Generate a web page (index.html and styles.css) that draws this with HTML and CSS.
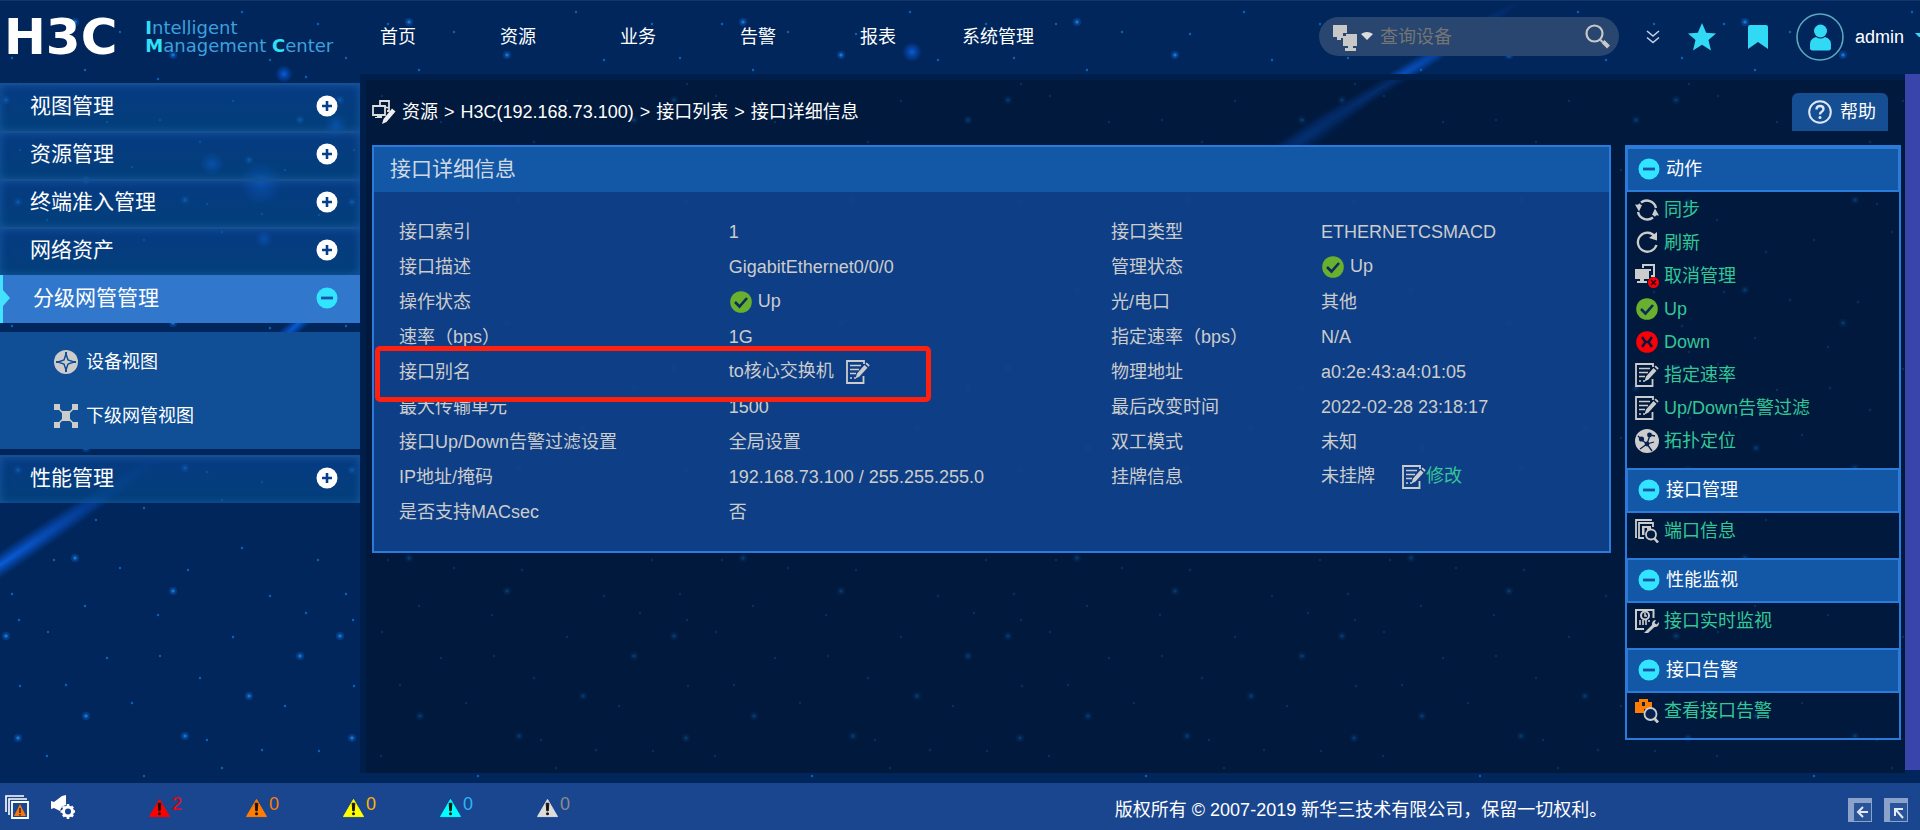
FILE: index.html
```html
<!DOCTYPE html>
<html lang="zh-CN">
<head>
<meta charset="UTF-8">
<meta name="viewport" content="width=device-width, initial-scale=1.0">
<title>接口详细信息</title>
<link rel="stylesheet" href="styles.css">
</head>
<body>

<!-- starry background -->
<svg class="sky" viewBox="0 0 1920 830" preserveAspectRatio="xMidYMid slice" aria-hidden="true">
    <defs>
        <pattern id="stars" width="334" height="268" patternUnits="userSpaceOnUse">
            <g fill="#0a64b4">
                <circle cx="12" cy="58" r="1.2"/><circle cx="54" cy="24" r="1.2"/><circle cx="48" cy="96" r="1.2"/>
                <circle cx="85" cy="70" r="1.2"/><circle cx="120" cy="32" r="1.2"/><circle cx="158" cy="79" r="1.2"/>
                <circle cx="19" cy="84" r="1.2"/><circle cx="107" cy="122" r="1.2"/><circle cx="66" cy="149" r="1.2"/>
                <circle cx="132" cy="167" r="1.2"/><circle cx="200" cy="142" r="1.2"/><circle cx="233" cy="101" r="1.2"/>
                <circle cx="188" cy="34" r="1.2"/><circle cx="270" cy="60" r="1.2"/><circle cx="306" cy="77" r="1.2"/>
                <circle cx="319" cy="215" r="1.2"/><circle cx="207" cy="204" r="1.2"/><circle cx="144" cy="240" r="1.2"/>
                <circle cx="47" cy="220" r="1.2"/><circle cx="285" cy="170" r="1.2"/><circle cx="242" cy="12" r="1.2"/>
                <circle cx="160" cy="120" r="1.2"/><circle cx="222" cy="232" r="1.2"/><circle cx="96" cy="252" r="1.2"/>
                <circle cx="262" cy="214" r="1.2"/><circle cx="318" cy="24" r="1.2"/><circle cx="20" cy="150" r="1.2"/>
            </g>
            <g fill="#063a86">
                <circle cx="6" cy="100" r="4"/><circle cx="75" cy="22" r="4"/><circle cx="173" cy="55" r="4"/>
                <circle cx="86" cy="180" r="4"/><circle cx="249" cy="160" r="4"/><circle cx="185" cy="200" r="4"/>
                <circle cx="300" cy="120" r="4"/><circle cx="18" cy="202" r="4"/>
            </g>
            <g fill="#1078c4">
                <circle cx="6" cy="100" r="1.8"/><circle cx="75" cy="22" r="1.8"/><circle cx="173" cy="55" r="1.8"/>
                <circle cx="86" cy="180" r="1.8"/><circle cx="249" cy="160" r="1.8"/><circle cx="185" cy="200" r="1.8"/>
                <circle cx="300" cy="120" r="1.8"/><circle cx="18" cy="202" r="1.8"/>
            </g>
        </pattern>
        <radialGradient id="glow">
            <stop offset="0" stop-color="#0a63e8" stop-opacity=".9"/>
            <stop offset="1" stop-color="#0a50c8" stop-opacity="0"/>
        </radialGradient>
    </defs>
    <rect width="1920" height="830" fill="#00265c"/>
    <rect width="1920" height="830" fill="url(#stars)"/>
    <ellipse cx="0" cy="0" rx="180" ry="9" fill="url(#glow)" transform="translate(1370 95) rotate(-32)"/>
    <ellipse cx="0" cy="0" rx="90" ry="14" fill="url(#glow)" transform="translate(1305 138) rotate(-34)"/>
    <ellipse cx="0" cy="0" rx="200" ry="12" fill="url(#glow)" transform="translate(0 565) rotate(-34)"/>
    <ellipse cx="0" cy="0" rx="90" ry="8" fill="url(#glow)" transform="translate(300 322) rotate(-42)"/>
    <circle cx="261" cy="183" r="22" fill="url(#glow)"/>
    <circle cx="336" cy="125" r="12" fill="url(#glow)"/>
    <circle cx="264" cy="239" r="9" fill="url(#glow)"/>
    <circle cx="284" cy="74" r="9" fill="url(#glow)"/>
    <circle cx="912" cy="52" r="10" fill="url(#glow)"/>
    <circle cx="212" cy="164" r="12" fill="url(#glow)"/>
</svg>

<!-- shared icons -->
<svg class="defs" aria-hidden="true">
    <symbol id="i-plus" viewBox="0 0 22 22"><circle cx="11" cy="11" r="10.5" fill="#fff"/><path d="M11 6v10M6 11h10" stroke="#06408a" stroke-width="2.6"/></symbol>
    <symbol id="i-minus" viewBox="0 0 22 22"><circle cx="11" cy="11" r="10.5" fill="#31e4ff"/><path d="M5 11h12" stroke="#1a55a5" stroke-width="2.8"/></symbol>
    <symbol id="i-ok" viewBox="0 0 24 24"><circle cx="12" cy="12" r="10.8" fill="#69b02e"/><path d="M6 12l4.500 4.500L18 8" fill="none" stroke="#0b2b5c" stroke-width="2.600"/></symbol>
    <symbol id="i-bad" viewBox="0 0 24 24"><circle cx="12" cy="12" r="10.8" fill="#fb0006"/><path d="M7 7l3.500 5L7 17M17 7l-3.500 5 3.500 5M9 12h6" fill="none" stroke="#08173c" stroke-width="2.600"/></symbol>
    <symbol id="i-edit" viewBox="0 0 24 24"><path d="M18 4V1H1v22h16.500v-7" fill="none" stroke="#ccc" stroke-width="1.800"/><path d="M4 5.500h11M4 9.500h9M4 13.500h6M4 18h2M8 18h2" stroke="#ccc" stroke-width="1.300"/><path d="M9.500 18.500l1.500-5L18.500 5l3 2.800-8 8.700z M19.500 3.800l1.200-1.200 3 2.600-1.200 1.600z" fill="#ccc"/></symbol>
    <symbol id="i-sync" viewBox="0 0 24 24"><path d="M6 4.500A9.500 9.500 0 0 1 21 10M18 19.500A9.500 9.500 0 0 1 3 14M3 10a9.500 9.500 0 0 1 2-4M21 14a9.500 9.500 0 0 1-2 4" fill="none" stroke="#ccc" stroke-width="2.400"/><path d="M0 6.500l7 .5-3 6.500zM24 17.500l-7-.5 3-6.500z" fill="#ccc"/></symbol>
    <symbol id="i-refresh" viewBox="0 0 24 24"><path d="M20 5.500A9.500 9.500 0 1 0 21.500 14" fill="none" stroke="#ccc" stroke-width="2.300"/><path d="M22 1v8.500l-8-2.500z" fill="#ccc"/></symbol>
    <symbol id="i-unmanage" viewBox="0 0 24 24"><path d="M8 4V1h11v11h-3" fill="none" stroke="#ccc" stroke-width="2"/><path d="M0 5h14v10H9v2h3v2H2v-2h3v-2H0zM11 5h5v2h-5z" fill="#ccc"/><circle cx="18.500" cy="18.500" r="5.500" fill="#fb0006"/><path d="M16 16l5 5m0-5l-5 5" stroke="#300018" stroke-width="1.600"/></symbol>
    <symbol id="i-topo" viewBox="0 0 24 24"><circle cx="12" cy="12" r="12" fill="#ccc"/><path d="M3 7l4 4M7 11l5 4M15 6l-3 9M12 15l7-2M12 15l-7 5M12 15l5 7M15 6l5 1" stroke="#07214f" stroke-width="1.300"/><circle cx="6.500" cy="10" r="2.600" fill="#07214f"/><circle cx="14.500" cy="6" r="2.400" fill="#07214f"/><circle cx="12" cy="15" r="2.400" fill="#07214f"/></symbol>
    <symbol id="i-port" viewBox="0 0 24 24"><path d="M2 18H1V1h15v1M18 8V4H4v15h5" fill="none" stroke="#ccc" stroke-width="1.800"/><path d="M7 16V7h9v3l-4 1v-2H9.500v7z" fill="#ccc"/><circle cx="16" cy="15.500" r="5" fill="none" stroke="#ccc" stroke-width="1.800"/><path d="M19 19l4 4.500" stroke="#ccc" stroke-width="2.600"/></symbol>
    <symbol id="i-monitor" viewBox="0 0 24 24"><path d="M9 20H1V1h17.500v8" fill="none" stroke="#ccc" stroke-width="2"/><circle cx="10" cy="6.500" r="4" fill="none" stroke="#ccc" stroke-width="2"/><path d="M10 4v3h2M5 16v-5M8 16v-5M11 16v-5M14 13v-2" fill="none" stroke="#ccc" stroke-width="1.600"/><path d="M9 24l8-8c-.5-3 1.500-5 4-5l-1.500 3 2 1.500L24 13c.3 3-1.500 5.500-4.500 5l-6.500 6z" fill="#ccc"/></symbol>
    <symbol id="i-alarmview" viewBox="0 0 24 24"><path d="M0 3h4V0h9v3h4v7H9v4H0z" fill="#ff7d00"/><path d="M7 3h3v4H7z" fill="#07214f"/><circle cx="15.500" cy="15" r="6" fill="#07214f" stroke="#ccc" stroke-width="1.800"/><path d="M19 19l4 4.500" stroke="#ccc" stroke-width="2.800"/></symbol>
    <symbol id="i-warn" viewBox="0 0 22 20"><path d="M11 1L21.500 19H.5z" fill="currentColor" stroke="currentColor"/><path d="M9.600 5h2.800l-.6 8h-1.600z" fill="#1a1208" stroke="#1a1208"/><circle cx="11" cy="16" r="1.600" fill="#1a1208"/></symbol>
</svg>

<header class="topbar">
    <a class="brand" href="#">
        <span class="logo">H3C</span>
        <span class="product"><b>I</b>ntelligent<br><b>M</b>anagement <b>C</b>enter</span>
    </a>
    <nav class="nav">
        <a href="#">首页</a>
        <a href="#">资源</a>
        <a href="#">业务</a>
        <a href="#">告警</a>
        <a href="#">报表</a>
        <a href="#">系统管理</a>
    </nav>
    <form class="search" role="search">
        <button type="button" class="search-type" aria-label="设备类型">
            <svg width="40" height="28" viewBox="0 0 40 28"><path d="M0 2h14v8h-4v5H8v2H4v-3H0z" fill="#c8c8c8"/><path d="M10 13h3v-2h11v12h-4v2h3v3H12v-3h3v-2h-5z" fill="#c8c8c8"/><path d="M28 11q6-4 12 0l-6 6z" fill="#ddd"/></svg>
        </button>
        <input type="text" placeholder="查询设备" aria-label="查询设备">
        <button type="submit" aria-label="查询">
            <svg width="25" height="25" viewBox="0 0 25 25"><circle cx="9.500" cy="9.500" r="8" fill="none" stroke="#c8c8c8" stroke-width="2.200"/><path d="M15.500 16l2 2" stroke="#c8c8c8" stroke-width="2"/><path d="M18 17.500l5.500 5.500" stroke="#c8c8c8" stroke-width="4"/></svg>
        </button>
    </form>
    <div class="tools">
        <button type="button" aria-label="更多"><svg width="14" height="14" viewBox="0 0 14 14"><path d="M1 1l6 5 6-5M1 7.500l6 5 6-5" fill="none" stroke="#c4d0e4" stroke-width="1.600"/></svg></button>
        <button type="button" aria-label="收藏"><svg width="28" height="28" viewBox="0 0 28 28"><path d="M14 0l4.200 9.700 9.800.8-7.500 6.500 2.500 10.500-9-5.700-9 5.700L7.500 17 0 10.500l9.800-.8z" fill="#31d9f5"/></svg></button>
        <button type="button" aria-label="书签"><svg width="20" height="24" viewBox="0 0 20 24"><path d="M2 0h16q2 0 2 2v22l-10-7-10 7V2q0-2 2-2z" fill="#31d9f5"/></svg></button>
    </div>
    <a class="user" href="#">
        <svg width="48" height="48" viewBox="0 0 48 48"><circle cx="24" cy="24" r="23" fill="none" stroke="#5ba7bd" stroke-width="1.600"/><circle cx="24.500" cy="18" r="6.500" fill="#31d9f5"/><path d="M14 36q-1-11 6-12 4.500 3 9 0 7 1 6 12-1 1.500-3 1.500H17q-2 0-3-1.500z" fill="#31d9f5"/></svg>
        <span>admin</span>
        <i class="user-caret"></i>
    </a>
</header>

<div class="body">
    <nav class="sidebar">
        <a class="menu" href="#">视图管理<svg><use href="#i-plus"/></svg></a>
        <a class="menu" href="#">资源管理<svg><use href="#i-plus"/></svg></a>
        <a class="menu" href="#">终端准入管理<svg><use href="#i-plus"/></svg></a>
        <a class="menu" href="#">网络资产<svg><use href="#i-plus"/></svg></a>
        <a class="menu active" href="#">分级网管管理<svg><use href="#i-minus"/></svg></a>
        <div class="submenu">
            <a href="#"><svg width="24" height="24" viewBox="0 0 24 24"><circle cx="12" cy="12" r="12" fill="#ccc"/><path d="M12 4l2 6 6 2-6 2-2 6-2-6-6-2 6-2z" fill="#ccc" stroke="#104f96" stroke-width="1.500"/><path d="M12 2v5M12 17v5M2 12h4M18 12h4" stroke="#104f96" stroke-width="2"/></svg>设备视图</a>
            <a href="#"><svg width="24" height="24" viewBox="0 0 24 24"><path d="M3 3l18 18M21 3L3 21" stroke="#ccc" stroke-width="1.500"/><path d="M0 0h6v6H0zM18 0h6v6h-6zM0 18h6v6H0zM18 18h6v6h-6zM8 7h8v10H8z" fill="#ccc"/></svg>下级网管视图</a>
        </div>
        <a class="menu" href="#">性能管理<svg><use href="#i-plus"/></svg></a>
    </nav>

    <main class="main">
        <div class="crumb-row">
            <svg width="24" height="24" viewBox="0 0 24 24"><path d="M8 5V1h9v10h-2M1 6h12v9H1zM13 7l4 1" fill="none" stroke="#ddd" stroke-width="1.800"/><path d="M5 15h5v3H3v-1h2z" fill="#ddd"/><path d="M10 24l1.500-5L20 8.500l3.500 3-9 10.500z" fill="#eee"/></svg>
            <p class="crumb"><a href="#">资源</a> <span>&gt;</span> <a href="#">H3C(192.168.73.100)</a> <span>&gt;</span> <a href="#">接口列表</a> <span>&gt;</span> 接口详细信息</p>
            <button type="button" class="help">
                <svg width="24" height="24" viewBox="0 0 24 24"><circle cx="12" cy="12" r="10.800" fill="none" stroke="#dfe8f5" stroke-width="2"/><path d="M8.500 9.500q0-3.500 3.500-3.500t3.500 3q0 1.800-1.800 2.800Q12 12.800 12 14.500" fill="none" stroke="#dfe8f5" stroke-width="2.300"/><circle cx="12" cy="17.600" r="1.500" fill="#dfe8f5"/></svg>
                帮助
            </button>
        </div>

        <div class="columns">
            <section class="panel">
                <h1>接口详细信息</h1>
                <table class="detail">
                    <tr><th scope="row">接口索引</th><td>1</td><th scope="row">接口类型</th><td>ETHERNETCSMACD</td></tr>
                    <tr><th scope="row">接口描述</th><td>GigabitEthernet0/0/0</td><th scope="row">管理状态</th><td><svg class="icon status"><use href="#i-ok"/></svg>Up</td></tr>
                    <tr><th scope="row">操作状态</th><td><svg class="icon status"><use href="#i-ok"/></svg>Up</td><th scope="row">光/电口</th><td>其他</td></tr>
                    <tr><th scope="row">速率（bps）</th><td>1G</td><th scope="row">指定速率（bps）</th><td>N/A</td></tr>
                    <tr><th scope="row">接口别名</th><td>to核心交换机<a class="alias-edit" href="#" aria-label="修改别名"><svg class="icon"><use href="#i-edit"/></svg></a></td><th scope="row">物理地址</th><td>a0:2e:43:a4:01:05</td></tr>
                    <tr><th scope="row">最大传输单元</th><td>1500</td><th scope="row">最后改变时间</th><td>2022-02-28 23:18:17</td></tr>
                    <tr><th scope="row">接口Up/Down告警过滤设置</th><td>全局设置</td><th scope="row">双工模式</th><td>未知</td></tr>
                    <tr><th scope="row">IP地址/掩码</th><td>192.168.73.100 / 255.255.255.0</td><th scope="row">挂牌信息</th><td>未挂牌<a class="tag-edit" href="#"><svg class="icon"><use href="#i-edit"/></svg>修改</a></td></tr>
                    <tr><th scope="row">是否支持MACsec</th><td>否</td><th></th><td></td></tr>
                </table>
                <div class="highlight"></div>
            </section>

            <aside class="actions">
                <h2><svg><use href="#i-minus"/></svg>动作</h2>
                <ul>
                    <li><a href="#"><svg class="icon"><use href="#i-sync"/></svg>同步</a></li>
                    <li><a href="#"><svg class="icon"><use href="#i-refresh"/></svg>刷新</a></li>
                    <li><a href="#"><svg class="icon"><use href="#i-unmanage"/></svg>取消管理</a></li>
                    <li><a href="#"><svg class="icon"><use href="#i-ok"/></svg>Up</a></li>
                    <li><a href="#"><svg class="icon"><use href="#i-bad"/></svg>Down</a></li>
                    <li><a href="#"><svg class="icon"><use href="#i-edit"/></svg>指定速率</a></li>
                    <li><a href="#"><svg class="icon"><use href="#i-edit"/></svg>Up/Down告警过滤</a></li>
                    <li><a href="#"><svg class="icon"><use href="#i-topo"/></svg>拓扑定位</a></li>
                </ul>
                <h2><svg><use href="#i-minus"/></svg>接口管理</h2>
                <ul>
                    <li><a href="#"><svg class="icon"><use href="#i-port"/></svg>端口信息</a></li>
                </ul>
                <h2><svg><use href="#i-minus"/></svg>性能监视</h2>
                <ul>
                    <li><a href="#"><svg class="icon"><use href="#i-monitor"/></svg>接口实时监视</a></li>
                </ul>
                <h2><svg><use href="#i-minus"/></svg>接口告警</h2>
                <ul>
                    <li><a href="#"><svg class="icon"><use href="#i-alarmview"/></svg>查看接口告警</a></li>
                </ul>
            </aside>
        </div>
    </main>
    <div class="strip"></div>
</div>

<footer class="footer">
    <div class="foot-tools">
        <button type="button" aria-label="告警列表"><svg width="24" height="24" viewBox="0 0 24 24"><path d="M1 17V1h18M4 20V4h18" fill="none" stroke="#fff" stroke-width="1.600"/><path d="M7 7h16v16H7z" fill="#1a468f" stroke="#fff" stroke-width="1.800"/><path d="M15 9l6 12H9z" fill="#f07a12"/><path d="M15 13v5M15 19v1.500" stroke="#5a2800" stroke-width="1.600"/></svg></button>
        <button type="button" aria-label="声音设置"><svg width="24" height="24" viewBox="0 0 24 24"><path d="M0 6l3 1 8-6 4-1v10q-5 1-6 6l-6-3-3 1z" fill="#fff"/><circle cx="17" cy="16.500" r="4.500" fill="none" stroke="#fff" stroke-width="3"/><path d="M17 9v3M17 21v3M9.500 16.500h3M21.500 16.500H24M12 11.500l2 2M22 11.500l-2 2M12 21.500l2-2M22 21.500l-2-2" stroke="#fff" stroke-width="2.600"/></svg></button>
    </div>
    <div class="alarms">
        <a class="critical" href="#"><svg><use href="#i-warn"/></svg><span>2</span></a>
        <a class="major" href="#"><svg><use href="#i-warn"/></svg><span>0</span></a>
        <a class="minor" href="#"><svg><use href="#i-warn"/></svg><span>0</span></a>
        <a class="notice" href="#"><svg><use href="#i-warn"/></svg><span>0</span></a>
        <a class="info" href="#"><svg><use href="#i-warn"/></svg><span>0</span></a>
    </div>
    <p class="copyright">版权所有 © 2007-2019 新华三技术有限公司，保留一切权利。</p>
    <div class="foot-nav">
        <button type="button" aria-label="收起"><svg width="24" height="24" viewBox="0 0 24 24"><path d="M0 0h24v24H0z" fill="#8ba3cb"/><path d="M6 5h17v18H6z" fill="#2a5499"/><path d="M20 14h-8M15 9l-5 5 5 5" fill="none" stroke="#e4ebf6" stroke-width="2"/></svg></button>
        <button type="button" aria-label="还原"><svg width="24" height="24" viewBox="0 0 24 24"><path d="M0 0h24v24H0z" fill="#8ba3cb"/><path d="M6 5h17v18H6z" fill="#2a5499"/><path d="M19 20l-7-8M11 18v-7h8" fill="none" stroke="#e4ebf6" stroke-width="2"/></svg></button>
    </div>
</footer>

</body>
</html>
```

FILE: styles.css
```css
* {
    box-sizing: border-box;
}
body {
    margin: 0;
    min-height: 100vh;
    display: flex;
    flex-direction: column;
    overflow-x: hidden;
    position: relative;
    font-family: "Liberation Sans", "Noto Sans CJK SC", sans-serif;
    font-size: 18px;
    line-height: 24px;
    color: #fff;
    background-color: #00265c;
}
a {
    color: inherit;
    text-decoration: none;
}
button {
    padding: 0;
    border: none;
    background: none;
    font: inherit;
    color: inherit;
    cursor: pointer;
}
button svg {
    display: block;
}
svg {
    flex: none;
}
.sky {
    position: absolute;
    top: 0;
    left: 0;
    width: 100%;
    height: 100%;
    z-index: -1;
}
.defs {
    position: absolute;
    width: 0;
    height: 0;
}
.icon {
    width: 24px;
    height: 24px;
}

/* top bar */
.topbar {
    height: 74px;
    padding-bottom: 2px;
    display: flex;
    align-items: center;
    border-top: 1px solid #12356b;
}
.brand {
    width: 338px;
    padding-left: 4px;
    display: flex;
    align-items: center;
    gap: 28px;
}
.logo {
    font-family: "DejaVu Sans", sans-serif;
    font-weight: bold;
    font-size: 50px;
    line-height: 46px;
}
.product {
    font-size: 18px;
    line-height: 18px;
    color: #3fa0dc;
    white-space: nowrap;
    font-family: "DejaVu Sans", sans-serif;
}
.product b {
    color: #2fe0f6;
}
.nav {
    display: flex;
}
.nav a {
    width: 120px;
    text-align: center;
}
.search {
    width: 300px;
    height: 39px;
    margin-left: auto;
    padding: 0 9px 0 14px;
    display: flex;
    align-items: center;
    gap: 7px;
    border-radius: 20px;
    background-color: #28466f;
}
.search input {
    flex: 1;
    min-width: 0;
    padding: 0;
    border: none;
    outline: none;
    background: none;
    font: inherit;
    color: #fff;
}
.search input::placeholder {
    color: #757575;
    opacity: 1;
}
.tools {
    margin-left: 27px;
    display: flex;
    align-items: center;
    gap: 28px;
}
.tools button + button + button {
    margin-left: 4px;
}
.user {
    margin-left: 28px;
    display: flex;
    align-items: center;
    gap: 11px;
}
.user-caret {
    width: 5px;
    border: 4px solid transparent;
    border-top-color: #31d9f5;
    border-right: none;
}

.body {
    flex: 1;
    display: flex;
}

/* left menu */
.sidebar {
    width: 360px;
    padding-top: 9px;
}
.menu {
    height: 48px;
    padding: 0 22px 4px 30px;
    display: flex;
    align-items: center;
    justify-content: space-between;
    font-size: 21px;
    background: linear-gradient(rgba(10, 70, 150, .65), rgba(4, 76, 138, .65));
    box-shadow: inset 0 0 8px rgba(30, 100, 180, .7);
    border-top: 2px solid #16508f;
}
.menu svg,
.actions h2 svg {
    width: 22px;
    height: 22px;
}
.menu.active {
    position: relative;
    padding-bottom: 2px;
    border-top: none;
    border-left: 3px solid #43e2ff;
    background: #3178cd;
    box-shadow: none;
}
.menu.active::before {
    content: "";
    position: absolute;
    left: 0;
    top: 15px;
    border: 8px solid transparent;
    border-left: 7px solid #43e2ff;
    border-right: none;
}
.submenu {
    margin: 9px 0 6px;
    padding: 3px 0 6px;
    background-color: #104f96;
}
.submenu a {
    height: 54px;
    padding-left: 54px;
    display: flex;
    align-items: center;
    gap: 8px;
}

/* content */
.main {
    flex: 1;
    min-width: 0;
    margin-bottom: 10px;
    padding: 0 4px 0 6px;
    border-top: 6px solid #001e4a;
    border-left: 6px solid #001e4a;
    background-color: rgba(0, 16, 40, .6);
    background-clip: padding-box;
}
.strip {
    width: 15px;
    margin-bottom: 13px;
    background-color: #3a45ab;
}
.crumb-row {
    padding: 13px 13px 14px 0;
    display: flex;
    align-items: center;
}
.crumb {
    flex: 1;
    margin: 0 0 0 6px;
}
.crumb span {
    margin: 0 1px;
}
.help {
    height: 38px;
    padding: 0 12px 0 16px;
    display: flex;
    align-items: center;
    gap: 8px;
    border-radius: 6px 6px 0 0;
    background-color: #154e92;
}
.columns {
    display: flex;
    align-items: flex-start;
    gap: 14px;
}
.panel {
    flex: 1;
    min-width: 0;
    position: relative;
    padding-bottom: 22px;
    border: 2px solid #2b7bda;
    background-color: rgba(15, 68, 142, .9);
}
.panel h1 {
    margin: 0 0 22px;
    padding: 0 16px 2px;
    font-size: 21px;
    font-weight: normal;
    line-height: 43px;
    color: #d0d8e4;
    background-color: #1358a6;
}
.detail {
    width: 100%;
    padding-left: 25px;
    table-layout: fixed;
    border-spacing: 0;
    color: #ccc;
}
.detail th,
.detail td {
    height: 35px;
    padding: 0;
    font-weight: normal;
    text-align: left;
    white-space: nowrap;
}
.detail th:first-child {
    width: 27.25%;
}
.detail td:nth-child(2) {
    width: 31.6%;
}
.detail th:nth-child(3) {
    width: 17.35%;
}
.detail .icon {
    vertical-align: middle;
}
.detail .status {
    margin-right: 5px;
}
.alias-edit {
    margin-left: 12px;
}
.tag-edit {
    margin-left: 27px;
    color: #34c796;
}
.highlight {
    position: absolute;
    top: 199px;
    left: 1px;
    width: 45%;
    height: 56px;
    border: 5px solid #ff2010;
    border-radius: 5px;
    pointer-events: none;
}

/* right panel */
.actions {
    width: 276px;
    border: 2px solid #2b7bda;
}
.actions h2 {
    height: 45px;
    margin: 0;
    padding: 0 10px 2px;
    display: flex;
    align-items: center;
    gap: 6px;
    border: 1px solid #2b7bda;
    border-width: 2px 1px;
    background-color: #1358a6;
    font-size: 18px;
    font-weight: normal;
}
.actions ul {
    margin: 0;
    padding: 1px 8px 11px;
    list-style: none;
}
.actions li a {
    height: 33px;
    display: flex;
    align-items: center;
    gap: 5px;
    color: #34c796;
}

/* bottom bar */
.footer {
    height: 47px;
    padding: 0 12px 0 5px;
    display: flex;
    align-items: center;
    background-color: #1a468f;
}
.foot-tools {
    width: 144px;
    display: flex;
    gap: 22px;
}
.alarms {
    padding-top: 3px;
    display: flex;
}
.alarms a {
    width: 97px;
    display: flex;
    align-items: center;
    gap: 2px;
}
.alarms svg {
    width: 21px;
    height: 20px;
}
.alarms span {
    padding-bottom: 8px;
}
.critical {
    color: #f00;
}
.major {
    color: #ff7d00;
}
.minor {
    color: #ff0;
}
.minor span {
    color: #ffb400;
}
.notice {
    color: #0ff;
}
.notice span {
    color: #29b6f6;
}
.info {
    color: #ddd;
}
.info span {
    color: #8c8c8c;
}
.copyright {
    margin: 6px auto 0;
    padding-left: 240px;
}
.foot-nav {
    margin-top: 6px;
    display: flex;
    gap: 12px;
}
```
